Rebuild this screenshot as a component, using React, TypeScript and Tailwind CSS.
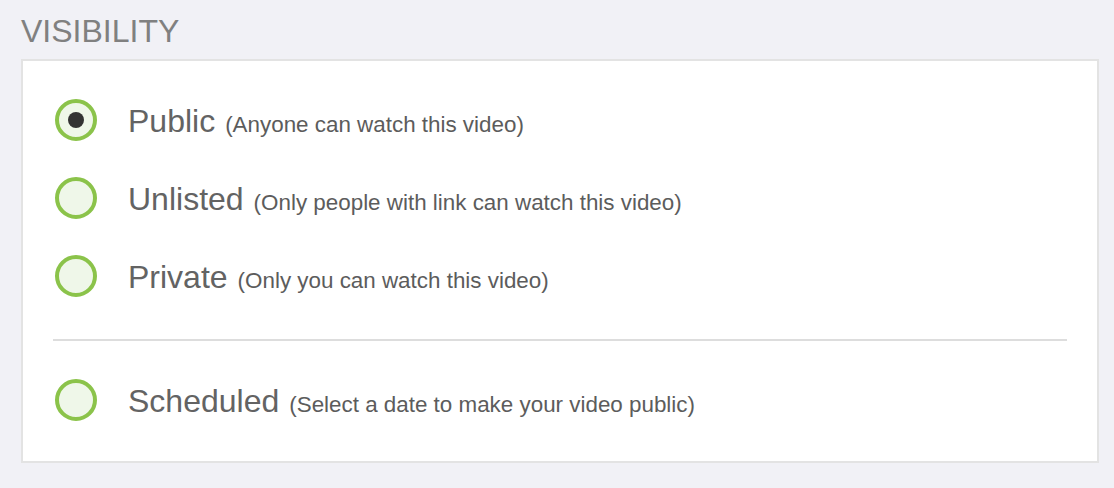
import React from "react";

type Option = {
  label: string;
  hint: string;
  checked?: boolean;
};

const options: Option[] = [
  { label: "Public", hint: "(Anyone can watch this video)", checked: true },
  { label: "Unlisted", hint: "(Only people with link can watch this video)" },
  { label: "Private", hint: "(Only you can watch this video)" },
];

function Radio({ checked }: { checked?: boolean }) {
  return (
    <div className="flex h-[42px] w-[42px] shrink-0 items-center justify-center rounded-full border-4 border-[#8bc34a] bg-[#eff7e9]">
      {checked && <div className="h-4 w-4 rounded-full bg-[#333333]" />}
    </div>
  );
}

function OptionRow({ label, hint, checked }: Option) {
  return (
    <div className="flex h-[42px] items-center pl-[2px]">
      <Radio checked={checked} />
      <div className="ml-[31px] flex items-baseline pt-[2px] text-[#636363]">
        <span className="text-[32px]">{label}</span>
        <span className="ml-[10px] text-[22.4px] text-[#5c5c5c]">{hint}</span>
      </div>
    </div>
  );
}

export default function App() {
  return (
    <div
      className="min-h-[488px] w-full bg-[#f1f1f6] pl-[21px] pr-[15px] pt-[15px]"
      style={{ fontFamily: '"Liberation Sans", Arial, sans-serif' }}
    >
      <h2 className="mb-[12px] text-[32px] leading-8 text-[#808080]">VISIBILITY</h2>
      <div className="w-[1078px] border-2 border-[#e3e3e3] bg-white px-[30px] pb-[40px] pt-[38px]">
        <div className="flex flex-col gap-[36px]">
          {options.map((o) => (
            <OptionRow key={o.label} {...o} />
          ))}
        </div>
        <div className="mb-[38px] mt-[42px] h-[2px] bg-[#dddddd]" />
        <OptionRow label="Scheduled" hint="(Select a date to make your video public)" />
      </div>
    </div>
  );
}
